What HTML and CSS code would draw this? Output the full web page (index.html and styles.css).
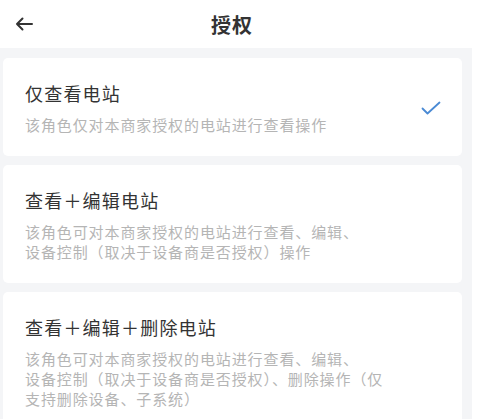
FILE: index.html
```html
<!DOCTYPE html>
<html lang="zh-CN">
<head>
  <meta charset="UTF-8">
  <meta name="viewport" content="width=device-width, initial-scale=1.0">
  <title>授权</title>
  <link rel="stylesheet" href="styles.css">
</head>
<body>
  <div class="page">
    <div class="header">
      <span class="back">
        <svg width="18" height="14" viewBox="0 0 18 14">
          <path d="M17 7H2M7.5 1.5L2 7l5.5 5.5" fill="none" stroke="#333" stroke-width="2" stroke-linecap="round" stroke-linejoin="round"/>
        </svg>
      </span>
      <span class="title">授权</span>
      <span></span>
    </div>

    <div class="list">
      <div class="card">
        <div class="card-body">
          <div class="card-title">仅查看电站</div>
          <div class="card-desc">该角色仅对本商家授权的电站进行查看操作</div>
        </div>
        <svg class="check" width="20" height="14" viewBox="0 0 20 14">
          <path d="M1.5 7.5l5 5L18.5 1.5" fill="none" stroke="#4a8ad4" stroke-width="1.8" stroke-linecap="round" stroke-linejoin="round"/>
        </svg>
      </div>

      <div class="card">
        <div class="card-body">
          <div class="card-title">查看＋编辑电站</div>
          <div class="card-desc">该角色可对本商家授权的电站进行查看、编辑、<br>设备控制（取决于设备商是否授权）操作</div>
        </div>
      </div>

      <div class="card">
        <div class="card-body">
          <div class="card-title">查看＋编辑＋删除电站</div>
          <div class="card-desc">该角色可对本商家授权的电站进行查看、编辑、<br>设备控制（取决于设备商是否授权）、删除操作（仅<br>支持删除设备、子系统）</div>
        </div>
      </div>
    </div>
  </div>
</body>
</html>
```

FILE: styles.css
```css
body {
  margin: 0;
  padding: 0;
  background: #fff;
  font-family: "Noto Sans CJK SC", "Noto Sans", sans-serif;
  color: #333;
  overflow: hidden;
}

.page {
  width: 472px;
  height: 100vh;
  background: #f4f5f7;
}

.header {
  display: grid;
  grid-template-columns: 40px 1fr 40px;
  align-items: center;
  width: 464px;
  height: 48px;
  padding-right: 8px;
  background: #fff;
}

.back {
  display: flex;
  padding-left: 15px;
}

.title {
  text-align: center;
  font-size: 20px;
  font-weight: bold;
  color: #333;
  letter-spacing: 1px;
}

.list {
  display: flex;
  flex-direction: column;
  gap: 9px;
  padding: 10px 10px 0 3px;
}

.card {
  display: flex;
  align-items: center;
  justify-content: space-between;
  background: #fff;
  border-radius: 5px;
  padding: 23px 21px 21px 22px;
}

.card-title {
  font-size: 18px;
  line-height: 24px;
  letter-spacing: 1.2px;
  color: #333;
  margin-bottom: 10px;
}

.card-desc {
  font-size: 15px;
  line-height: 20px;
  letter-spacing: 0.9px;
  color: #b5b5b5;
}

.check {
  flex-shrink: 0;
}
```
